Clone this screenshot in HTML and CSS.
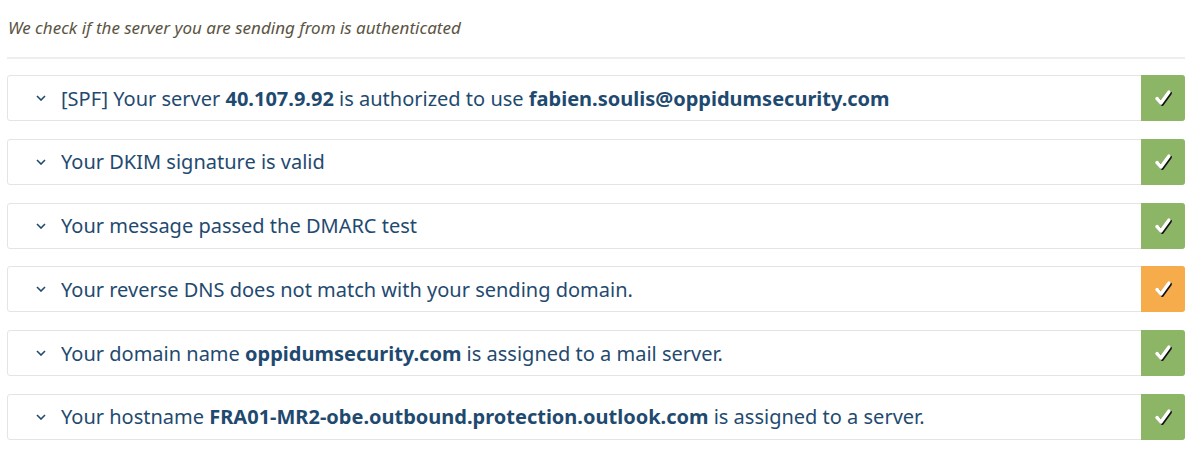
FILE: index.html
```html
<!DOCTYPE html>
<html lang="en">
<head>
    <meta charset="UTF-8">
    <meta name="viewport" content="width=device-width, initial-scale=1.0">
    <title>Authentication</title>
    <link rel="stylesheet" href="styles.css">
</head>
<body>
    <div class="container">
        <p class="intro">We check if the server you are sending from is authenticated</p>
        <hr class="divider">

        <ul class="checks">
            <li class="check">
                <span class="chevron"><svg width="10" height="6" viewBox="0 0 10 6"><path d="M1 1l4 4 4-4" fill="none" stroke="#1f4a70" stroke-width="1.6"/></svg></span>
                <span class="label">[SPF] Your server <b>40.107.9.92</b> is authorized to use <b>fabien.soulis@oppidumsecurity.com</b></span>
                <span class="status ok"><svg class="tick" width="20" height="18" viewBox="0 0 20 18"><path d="M4 9.5l4 4.5 8-11" fill="none" stroke="#111" stroke-width="3.4" stroke-linecap="round" stroke-linejoin="round" transform="translate(1.2 1.2)"/><path d="M4 9.5l4 4.5 8-11" fill="none" stroke="#fff" stroke-width="3.4" stroke-linecap="round" stroke-linejoin="round"/></svg></span>
            </li>
            <li class="check">
                <span class="chevron"><svg width="10" height="6" viewBox="0 0 10 6"><path d="M1 1l4 4 4-4" fill="none" stroke="#1f4a70" stroke-width="1.6"/></svg></span>
                <span class="label">Your DKIM signature is valid</span>
                <span class="status ok"><svg class="tick" width="20" height="18" viewBox="0 0 20 18"><path d="M4 9.5l4 4.5 8-11" fill="none" stroke="#111" stroke-width="3.4" stroke-linecap="round" stroke-linejoin="round" transform="translate(1.2 1.2)"/><path d="M4 9.5l4 4.5 8-11" fill="none" stroke="#fff" stroke-width="3.4" stroke-linecap="round" stroke-linejoin="round"/></svg></span>
            </li>
            <li class="check">
                <span class="chevron"><svg width="10" height="6" viewBox="0 0 10 6"><path d="M1 1l4 4 4-4" fill="none" stroke="#1f4a70" stroke-width="1.6"/></svg></span>
                <span class="label">Your message passed the DMARC test</span>
                <span class="status ok"><svg class="tick" width="20" height="18" viewBox="0 0 20 18"><path d="M4 9.5l4 4.5 8-11" fill="none" stroke="#111" stroke-width="3.4" stroke-linecap="round" stroke-linejoin="round" transform="translate(1.2 1.2)"/><path d="M4 9.5l4 4.5 8-11" fill="none" stroke="#fff" stroke-width="3.4" stroke-linecap="round" stroke-linejoin="round"/></svg></span>
            </li>
            <li class="check">
                <span class="chevron"><svg width="10" height="6" viewBox="0 0 10 6"><path d="M1 1l4 4 4-4" fill="none" stroke="#1f4a70" stroke-width="1.6"/></svg></span>
                <span class="label">Your reverse DNS does not match with your sending domain.</span>
                <span class="status warn"><svg class="tick" width="20" height="18" viewBox="0 0 20 18"><path d="M4 9.5l4 4.5 8-11" fill="none" stroke="#111" stroke-width="3.4" stroke-linecap="round" stroke-linejoin="round" transform="translate(1.2 1.2)"/><path d="M4 9.5l4 4.5 8-11" fill="none" stroke="#fff" stroke-width="3.4" stroke-linecap="round" stroke-linejoin="round"/></svg></span>
            </li>
            <li class="check">
                <span class="chevron"><svg width="10" height="6" viewBox="0 0 10 6"><path d="M1 1l4 4 4-4" fill="none" stroke="#1f4a70" stroke-width="1.6"/></svg></span>
                <span class="label">Your domain name <b>oppidumsecurity.com</b> is assigned to a mail server.</span>
                <span class="status ok"><svg class="tick" width="20" height="18" viewBox="0 0 20 18"><path d="M4 9.5l4 4.5 8-11" fill="none" stroke="#111" stroke-width="3.4" stroke-linecap="round" stroke-linejoin="round" transform="translate(1.2 1.2)"/><path d="M4 9.5l4 4.5 8-11" fill="none" stroke="#fff" stroke-width="3.4" stroke-linecap="round" stroke-linejoin="round"/></svg></span>
            </li>
            <li class="check">
                <span class="chevron"><svg width="10" height="6" viewBox="0 0 10 6"><path d="M1 1l4 4 4-4" fill="none" stroke="#1f4a70" stroke-width="1.6"/></svg></span>
                <span class="label">Your hostname <b>FRA01-MR2-obe.outbound.protection.outlook.com</b> is assigned to a server.</span>
                <span class="status ok"><svg class="tick" width="20" height="18" viewBox="0 0 20 18"><path d="M4 9.5l4 4.5 8-11" fill="none" stroke="#111" stroke-width="3.4" stroke-linecap="round" stroke-linejoin="round" transform="translate(1.2 1.2)"/><path d="M4 9.5l4 4.5 8-11" fill="none" stroke="#fff" stroke-width="3.4" stroke-linecap="round" stroke-linejoin="round"/></svg></span>
            </li>
        </ul>
    </div>
</body>
</html>
```

FILE: styles.css
```css
body {
    margin: 0;
    padding: 0;
    background: #fff;
    font-family: 'Noto Sans', 'Open Sans', sans-serif;
}

.container {
    padding: 0 15px 0 7px;
}

.intro {
    margin: 0;
    padding: 16px 0 0 1px;
    height: 24px;
    font-style: italic;
    font-size: 17px;
    color: #5b5444;
}

.divider {
    margin: 17px 0 0 0;
    border: none;
    border-top: 2px solid #eeeeee;
}

.checks {
    list-style: none;
    margin: 16px 0 0 0;
    padding: 0;
    display: flex;
    flex-direction: column;
    gap: 17.8px;
}

.check {
    display: flex;
    align-items: center;
    height: 44px;
    border: 1px solid #e4e4e4;
    border-radius: 3px;
    color: #1f4a70;
    font-size: 20px;
}

.check b {
    font-weight: 700;
}

.chevron {
    display: flex;
    width: 10px;
    margin: 0 15px 0 28px;
}

.label {
    flex: 1;
    white-space: nowrap;
}

.status {
    align-self: stretch;
    width: 44px;
    margin: -1px -1px -1px 0;
    display: flex;
    align-items: center;
    justify-content: center;
    border-radius: 0 3px 3px 0;
}

.status.ok {
    background: #8cb665;
}

.status.warn {
    background: #f6ac4b;
}

.tick {
    display: block;
}
```
